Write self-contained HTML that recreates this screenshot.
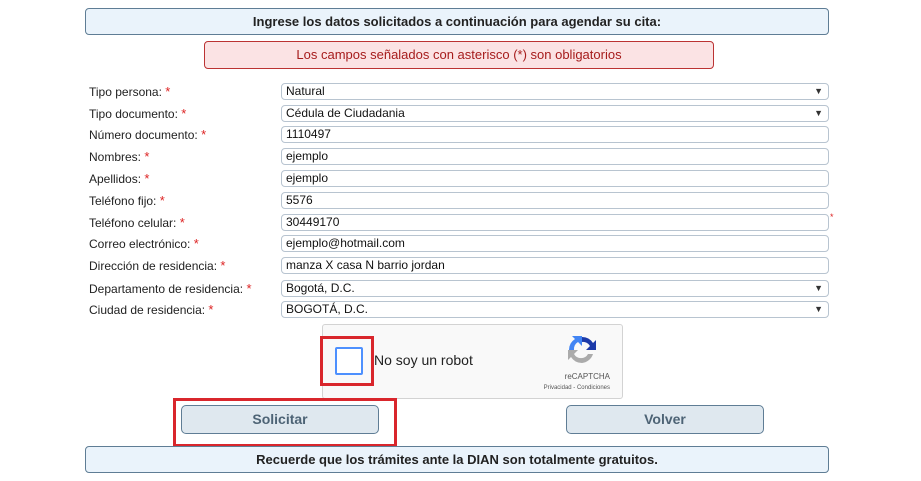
<!DOCTYPE html>
<html><head><meta charset="utf-8"><style>
body{margin:0;width:921px;height:481px;background:#fff;position:relative;font-family:"Liberation Sans",Arial,sans-serif;overflow:hidden}
.a{position:absolute}
.hdr{left:85px;width:742px;height:25px;background:#eaf3fb;border:1px solid #5f7d95;border-radius:4px;text-align:center;font-weight:bold;font-size:13px;line-height:25px;color:#222}
.lab{left:89px;font-size:12px;color:#222;line-height:14px}
.lab b{color:#d22;font-weight:normal;font-size:13px}
.in{left:281px;width:542px;height:15px;border:1px solid #b8c4d0;border-radius:4px;font-size:12px;line-height:15px;padding-left:4px;color:#111;box-sizing:content-box}
.in.s:after{content:"▼";position:absolute;right:5px;top:0;font-size:9px;color:#333}
.btn{top:405px;width:196px;height:27px;background:#dfe8ef;border:1.5px solid #5f7d95;border-radius:5px;text-align:center;font-weight:bold;font-size:14px;line-height:27px;color:#4d6375}
</style></head><body>
<div class="a hdr" style="top:8px">Ingrese los datos solicitados a continuación para agendar su cita:</div>
<div class="a" style="left:204px;top:41px;width:508px;height:26px;background:#fbe3e4;border:1px solid #b33;border-radius:4px;text-align:center;font-size:13px;line-height:26px;color:#a61c1c">Los campos señalados con asterisco (*) son obligatorios</div>

<div class="a lab" style="top:85px">Tipo persona: <b>*</b></div>
<div class="a in s" style="top:83px">Natural</div>
<div class="a lab" style="top:107px">Tipo documento: <b>*</b></div>
<div class="a in s" style="top:105px">Cédula de Ciudadania</div>
<div class="a lab" style="top:128px">Número documento: <b>*</b></div>
<div class="a in" style="top:126px">1110497</div>
<div class="a lab" style="top:150px">Nombres: <b>*</b></div>
<div class="a in" style="top:148px">ejemplo</div>
<div class="a lab" style="top:172px">Apellidos: <b>*</b></div>
<div class="a in" style="top:170px">ejemplo</div>
<div class="a lab" style="top:194px">Teléfono fijo: <b>*</b></div>
<div class="a in" style="top:192px">5576</div>
<div class="a lab" style="top:216px">Teléfono celular: <b>*</b></div>
<div class="a in" style="top:214px">30449170</div>
<div class="a" style="left:830px;top:212px;color:#d22;font-size:9px">*</div>
<div class="a lab" style="top:237px">Correo electrónico: <b>*</b></div>
<div class="a in" style="top:235px">ejemplo@hotmail.com</div>
<div class="a lab" style="top:259px">Dirección de residencia: <b>*</b></div>
<div class="a in" style="top:257px">manza X casa N barrio jordan</div>
<div class="a lab" style="top:282px">Departamento de residencia: <b>*</b></div>
<div class="a in s" style="top:280px">Bogotá, D.C.</div>
<div class="a lab" style="top:303px">Ciudad de residencia: <b>*</b></div>
<div class="a in s" style="top:301px">BOGOTÁ, D.C.</div>

<div class="a" style="left:322px;top:324px;width:299px;height:73px;background:#f9f9f9;border:1px solid #d3d3d3;border-radius:3px"></div>
<div class="a" style="left:335px;top:347px;width:24px;height:24px;border:2px solid #4d90fe;border-radius:2px;background:#fff"></div>
<div class="a" style="left:320px;top:336px;width:48px;height:44px;border:3px solid #d9262c"></div>
<div class="a" style="left:374px;top:352px;font-size:14px;color:#222">No soy un robot</div>
<svg class="a" style="left:566px;top:334px" width="32" height="32" viewBox="0 0 32 32">
<path d="M16 3a13 13 0 0 1 11 6l3-3v10H20l4-4a8 8 0 0 0-8-4z" fill="#1c3aa9"/>
<path d="M3 16A13 13 0 0 1 9 5l-3-3h10v10l-4-4a8 8 0 0 0-4 8z" fill="#4285f4"/>
<path d="M16 29a13 13 0 0 1-11-6l-3 3V16h10l-4 4a8 8 0 0 0 14 0h5a13 13 0 0 1-11 9z" fill="#ababab"/>
</svg>
<div class="a" style="left:528px;top:372px;width:82px;text-align:right;font-size:8px;color:#555">reCAPTCHA</div>
<div class="a" style="left:515px;top:385px;width:95px;text-align:right;font-size:6px;color:#555">Privacidad - Condiciones</div>

<div class="a btn" style="left:181px">Solicitar</div>
<div class="a" style="left:173px;top:398px;width:218px;height:43px;border:3px solid #d9262c"></div>
<div class="a btn" style="left:566px">Volver</div>
<div class="a hdr" style="top:446px">Recuerde que los trámites ante la DIAN son totalmente gratuitos.</div>
</body></html>
